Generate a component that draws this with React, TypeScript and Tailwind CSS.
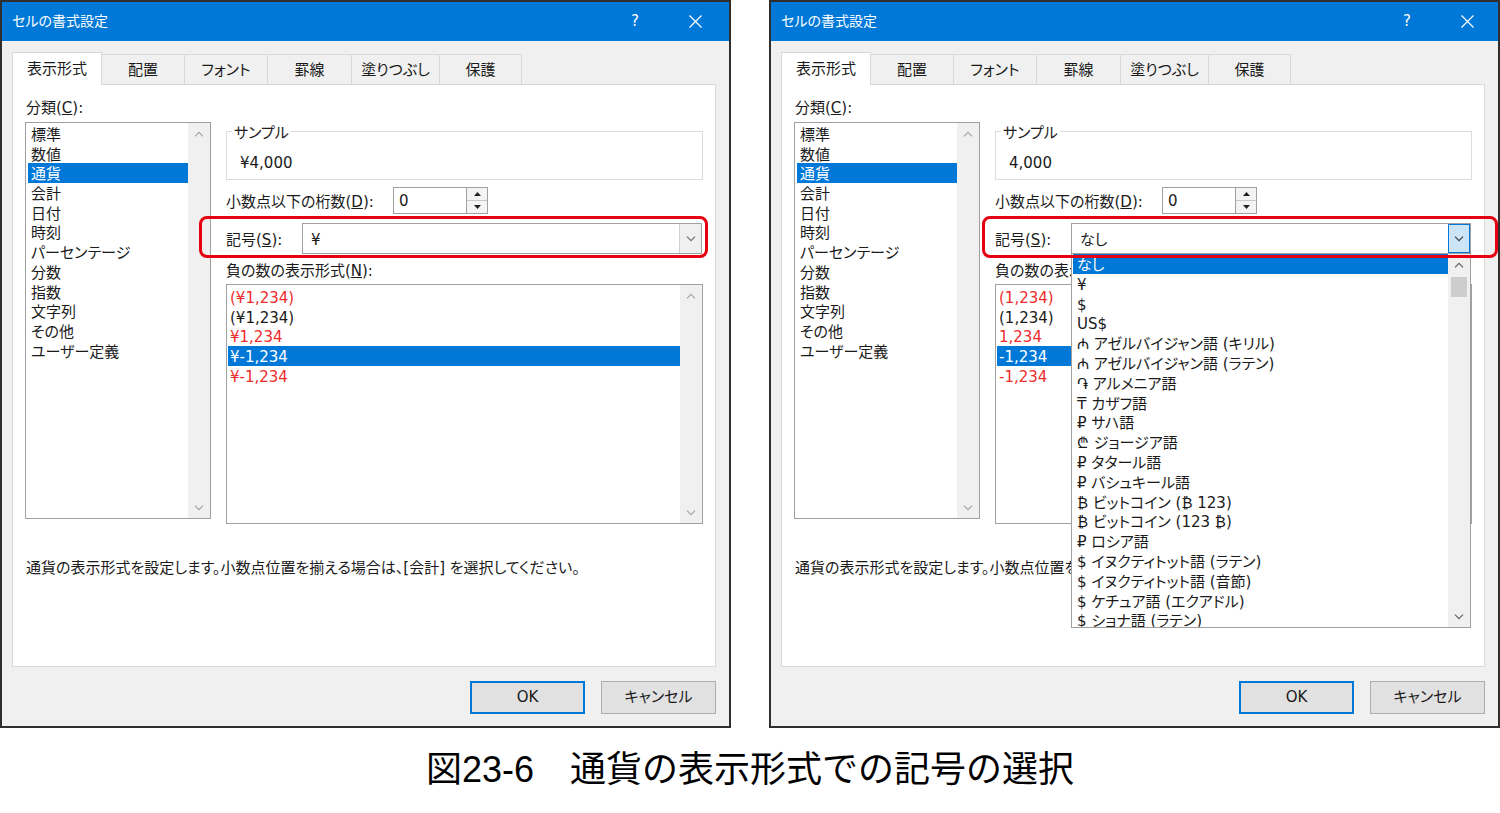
import React from "react";

const UI = "font-['DejaVu_Sans','Noto_Sans_CJK_JP',sans-serif] [font-feature-settings:'palt']";

const tabs = [
  { label: "表示形式", w: "w-[90px]" },
  { label: "配置", w: "w-[84px]" },
  { label: "フォント", w: "w-[84px]" },
  { label: "罫線", w: "w-[85px]" },
  { label: "塗りつぶし", w: "w-[89px]" },
  { label: "保護", w: "w-[83px]" },
];

const categories = ["標準", "数値", "通貨", "会計", "日付", "時刻", "パーセンテージ", "分数", "指数", "文字列", "その他", "ユーザー定義"];

// 記号のドロップダウン
const symbols = [
  "なし",
  "¥",
  "$",
  "US$",
  "₼ アゼルバイジャン語 (キリル)",
  "₼ アゼルバイジャン語 (ラテン)",
  "֏ アルメニア語",
  "₸ カザフ語",
  "₽ サハ語",
  "₾ ジョージア語",
  "₽ タタール語",
  "₽ バシュキール語",
  "₿ ビットコイン (₿ 123)",
  "₿ ビットコイン (123 ₿)",
  "₽ ロシア語",
  "$ イヌクティトット語 (ラテン)",
  "$ イヌクティトット語 (音節)",
  "$ ケチュア語 (エクアドル)",
  "$ ショナ語 (ラテン)",
];

function Chevron({ up, color = "#a6a6a6" }: { up?: boolean; color?: string }) {
  return (
    <svg width="10" height="6" viewBox="0 0 10 6" fill="none">
      <path d={up ? "M1 5.3 5 1.3 9 5.3" : "M1 0.7 5 4.7 9 0.7"} stroke={color} strokeWidth="1.2" />
    </svg>
  );
}

function ScrollBar({ thumb }: { thumb?: boolean }) {
  return (
    <div className="w-[22px] h-full shrink-0 bg-[#f0f0f0] flex flex-col">
      <div className="h-[22px] flex items-center justify-center">
        <Chevron up color={thumb ? "#606060" : "#a6a6a6"} />
      </div>
      {thumb && <div className="h-[20px] mx-[3px] mt-[1px] bg-[#cdcdcd]" />}
      <div className="flex-1" />
      <div className="h-[21px] flex items-center justify-center">
        <Chevron color={thumb ? "#606060" : "#a6a6a6"} />
      </div>
    </div>
  );
}

function Dialog({ open }: { open: boolean }) {
  const cur = open ? "" : "¥";
  const negatives = [
    { t: `(${cur}1,234)`, red: true },
    { t: `(${cur}1,234)`, red: false },
    { t: `${cur}1,234`, red: true },
    { t: `${cur}-1,234`, sel: true },
    { t: `${cur}-1,234`, red: true },
  ];

  return (
    <div className={`${UI} w-[731px] h-[728px] shrink-0 border-2 border-[#2e2e2e] bg-[#f0f0f0] flex flex-col text-[15px] text-[#1a1a1a]`}>
      {/* タイトルバー */}
      <div
        className={`h-[39px] shrink-0 bg-[#0078d7] flex items-center pl-[10px] text-white text-[14px] ${
          open ? "pr-[24px]" : "pr-[27px]"
        }`}
      >
        <span>セルの書式設定</span>
        <span className="ml-auto mr-[50px] text-[15px]">?</span>
        <svg width="13" height="13" viewBox="0 0 13 13">
          <path d="M0.5 0.5 12.5 12.5 M12.5 0.5 0.5 12.5" stroke="#fff" strokeWidth="1.2" />
        </svg>
      </div>

      <div className="flex-1 flex flex-col pl-[10px] pr-[13px] pt-[11px]">
        {/* タブ */}
        <div className="h-[32px] flex items-end">
          {tabs.map((t, i) =>
            i === 0 ? (
              <div
                key={t.label}
                className={`${t.w} h-[33px] -mb-px relative z-10 bg-white border border-b-0 border-[#d9d9d9] flex items-center justify-center`}
              >
                {t.label}
              </div>
            ) : (
              <div
                key={t.label}
                className={`${t.w} h-[30px] -ml-px bg-[#f0f0f0] border border-b-0 border-[#d9d9d9] flex items-center justify-center pt-[1px]`}
              >
                {t.label}
              </div>
            )
          )}
        </div>

        {/* タブの中身 */}
        <div className="relative h-[583px] bg-white border border-[#d9d9d9] px-[12px] pt-[12px]">
          <div className="flex gap-[15px]">
            {/* 分類 */}
            <div className="w-[186px] shrink-0">
              <div className="h-[20px] pt-[2px] leading-[18px] pl-[1px]">
                分類(<u>C</u>):
              </div>
              <div className="mt-[5px] h-[397px] border border-[#a0a0a0] flex">
                <div className="flex-1 pt-[1px]">
                  {categories.map((c, i) => (
                    <div
                      key={c}
                      className={`ml-[2px] pl-[3px] h-[19.7px] pt-[4px] leading-[15.7px] ${i === 2 ? "bg-[#0078d7] text-white" : ""}`}
                    >
                      {c}
                    </div>
                  ))}
                </div>
                <ScrollBar />
              </div>
            </div>

            {/* 右側 */}
            <div className="w-[477px] shrink-0">
              <div className="relative mt-[34px] h-[49px] border border-[#dcdcdc] pl-[13px] pt-[21px] leading-[20px]">
                <span className="absolute -top-[9px] left-[5px] bg-white px-[2px] leading-[20px]">サンプル</span>
                {cur}4,000
              </div>

              <div className="mt-[7px] h-[27px] flex items-center">
                <div className="w-[167px] shrink-0 pt-[4px]">
                  小数点以下の桁数(<u>D</u>):
                </div>
                <div className="h-[27px] w-[74px] border border-[#a0a0a0] bg-white pl-[5px] pt-[2px] leading-[22px]">0</div>
                <div className="h-[27px] w-[21px] border border-l-0 border-[#a0a0a0] flex flex-col bg-[#f4f4f4]">
                  <div className="flex-1 flex items-center justify-center border-b border-[#c8c8c8]">
                    <svg width="7" height="4" viewBox="0 0 7 4">
                      <path d="M0 4 3.5 0 7 4Z" fill="#202020" />
                    </svg>
                  </div>
                  <div className="flex-1 flex items-center justify-center">
                    <svg width="7" height="4" viewBox="0 0 7 4">
                      <path d="M0 0 3.5 4 7 0Z" fill="#202020" />
                    </svg>
                  </div>
                </div>
              </div>

              <div className="mt-[9px] h-[31px] flex items-center">
                <div className="w-[76px] shrink-0 pt-[3px]">
                  記号(<u>S</u>):
                </div>
                <div className="relative z-20 w-[400px] h-[31px] border border-[#a0a0a0] bg-white flex">
                  <div className="flex-1 pl-[8px] pt-[3px] leading-[26px]">{open ? "なし" : "¥"}</div>
                  {open ? (
                    <div className="w-[22px] border border-[#0078d7] bg-[#cce4f7] flex items-center justify-center">
                      <Chevron color="#404040" />
                    </div>
                  ) : (
                    <div className="w-[22px] border-l border-[#d0d0d0] bg-[#f0f0f0] flex items-center justify-center">
                      <Chevron color="#707070" />
                    </div>
                  )}

                  {open && (
                    <div className="absolute -left-px top-full w-[400px] h-[375px] border border-[#a0a0a0] bg-white flex overflow-hidden">
                      <div className="flex-1 pl-[1px] overflow-hidden">
                        {symbols.map((s, i) => (
                          <div
                            key={s}
                            className={`pl-[4px] h-[19.8px] pt-[4px] leading-[15.8px] whitespace-nowrap ${
                              i === 0 ? "bg-[#0078d7] text-white" : ""
                            }`}
                          >
                            {s}
                          </div>
                        ))}
                      </div>
                      <ScrollBar thumb />
                    </div>
                  )}
                </div>
              </div>

              <div className="mt-[6px] h-[20px] pt-[2px] leading-[18px]">
                負の数の表示形式(<u>N</u>):
              </div>
              <div className="mt-[4px] h-[240px] border border-[#a0a0a0] flex">
                <div className="flex-1 pt-[2px]">
                  {negatives.map((n, i) => (
                    <div
                      key={i}
                      className={`ml-[1px] pl-[2px] h-[19.7px] pt-[4px] leading-[15.7px] ${
                        n.sel ? "bg-[#0078d7] text-white" : n.red ? "text-[#ee2b2b]" : ""
                      }`}
                    >
                      {n.t}
                    </div>
                  ))}
                </div>
                <ScrollBar />
              </div>
            </div>
          </div>

          <div className="mt-[33px] pt-[1px] leading-[20px] pl-[1px]">
            通貨の表示形式を設定します。小数点位置を揃える場合は、[会計] を選択してください。
          </div>

          {/* 赤枠 */}
          <div
            className={`absolute z-30 top-[131px] h-[42px] border-[3px] border-[#e60012] rounded-[8px] ${
              open ? "left-[200px] w-[516px]" : "left-[186px] w-[509px]"
            }`}
          />
        </div>

        {/* ボタン */}
        <div className="mt-[14px] flex justify-end gap-[16px]">
          <div className="w-[115px] h-[33px] border-2 border-[#0078d7] bg-[#e1e1e1] flex items-center justify-center">OK</div>
          <div className="w-[115px] h-[33px] border border-[#adadad] bg-[#e1e1e1] flex items-center justify-center">キャンセル</div>
        </div>
      </div>
    </div>
  );
}

export default function App() {
  return (
    <div className="w-[1500px] h-[813px] bg-white overflow-hidden">
      <div className="flex">
        <Dialog open={false} />
        <div className="ml-[38px]">
          <Dialog open />
        </div>
      </div>
      <div className="mt-[22px] text-center font-['Liberation_Sans','Noto_Sans_CJK_JP',sans-serif] text-[36px] leading-[40px] text-black">
        図23-6　通貨の表示形式での記号の選択
      </div>
    </div>
  );
}
